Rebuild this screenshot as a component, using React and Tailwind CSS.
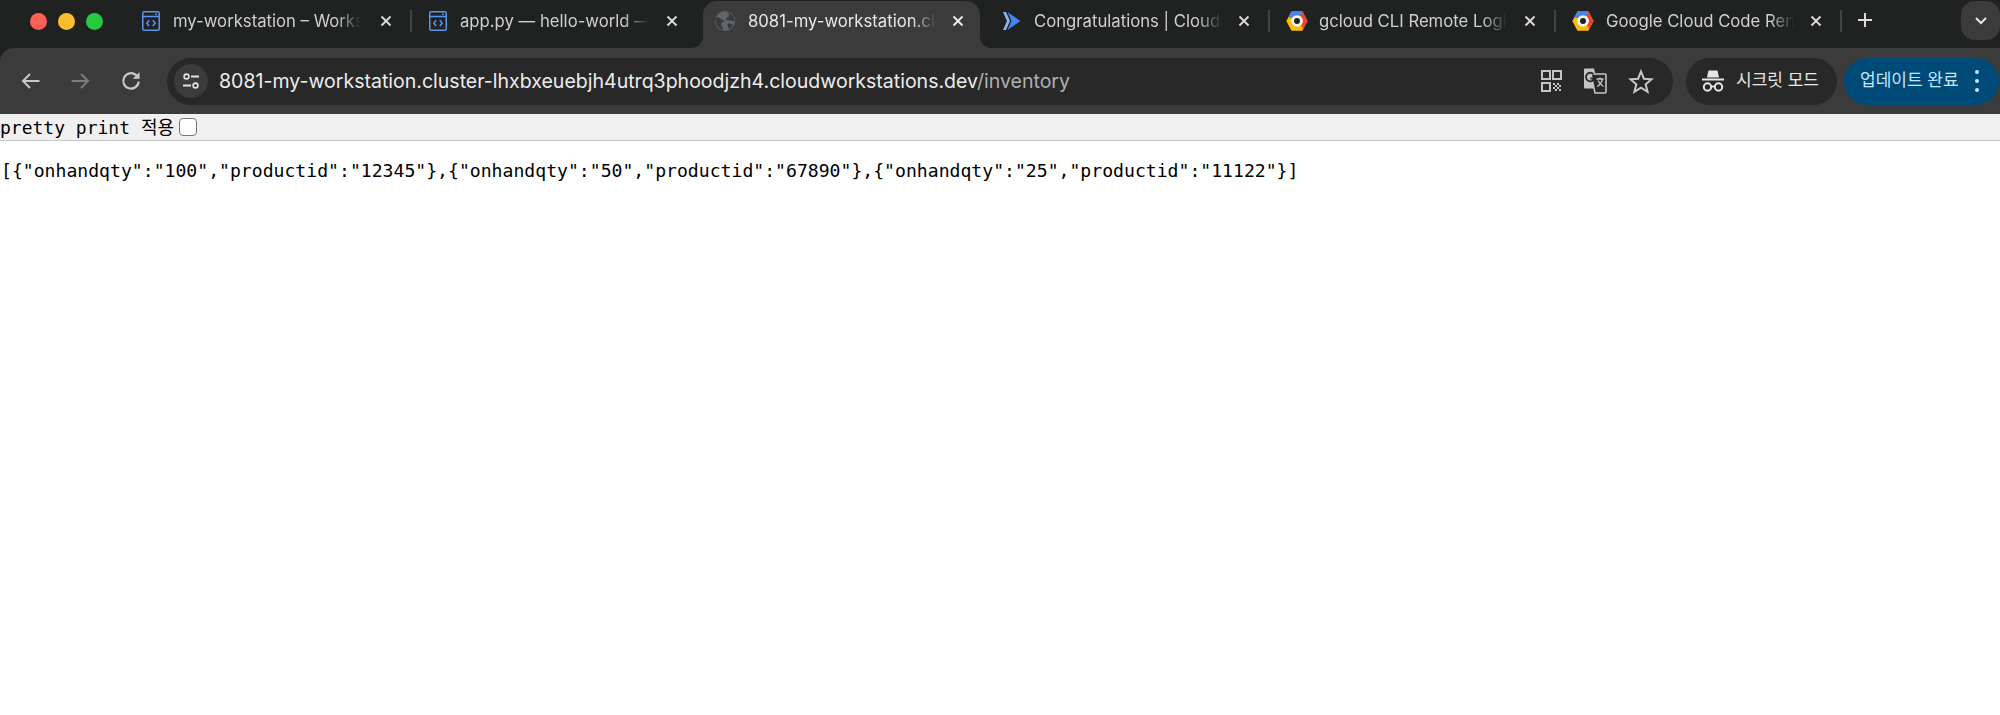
import React from "react";

const sans = "font-['Inter','Noto_Sans_CJK_KR',sans-serif]";

function CodeIcon() {
  return (
    <svg width="18" height="20" viewBox="0 0 18 20" fill="none" className="shrink-0">
      <rect x="0.75" y="0.75" width="16.5" height="18.5" rx="1.5" stroke="#5a95ee" strokeWidth="1.5" />
      <path d="M1 5.5H17" stroke="#5a95ee" strokeWidth="1.5" />
      <circle cx="14" cy="3.2" r="0.9" fill="#5a95ee" />
      <path d="M7.2 9.3 4.8 12.2l2.4 2.9M10.8 9.3l2.4 2.9-2.4 2.9" stroke="#5a95ee" strokeWidth="1.5" />
    </svg>
  );
}

function GlobeIcon() {
  return (
    <svg width="20" height="20" viewBox="0 0 20 20" className="shrink-0">
      <circle cx="10" cy="10" r="10" fill="#62656a" />
      <path d="M1 6c3 0 4 1 5 2s3 0 3 2-3 1-3 3 2 2 2 6C4 18 1 14 .5 10ZM12 1c1 2 3 2 2 4s-3 1-3 3 4 1 6 2 2 1 2.5 0C19 5 16 2 12 1ZM13 13c2-1 4 0 5 1-1 2-2 3-4 4-1-2-2-4-1-5Z" fill="#3a3a3a" />
    </svg>
  );
}

function RunIcon() {
  return (
    <svg width="18" height="18" viewBox="0 0 18 18" className="shrink-0">
      <path d="M0 0H3L7 9 3 18H0L4 9Z" fill="#8ab4f8" />
      <path d="M4.500 0 17.500 9 4.500 18 8.500 9Z" fill="#4285f4" />
    </svg>
  );
}

function GcpIcon() {
  return (
    <svg width="22" height="20" viewBox="0 0 22 20" className="shrink-0">
      <path d="M5.5 0.5H16.5L21.5 10L16.5 19.5H5.5L0.5 10Z" fill="#fbbc05" />
      <path d="M5.5 0.5H16.5L17.5 5H6.5Z" fill="#4285f4" />
      <path d="M2.5 6.2 5.5 0.5 8 4 6.2 7.5Z" fill="#4285f4" />
      <path d="M16.5 0.5 21.5 10 16.5 19.5 15 15.5 17 10 14.5 4Z" fill="#ea4335" />
      <path d="M0.5 10 2.5 6.2 6 8.5 6 12.5 8 15.5 16.5 15.5 16.5 19.5H5.5Z" fill="#fbbc05" />
      <circle cx="11" cy="10" r="5.8" fill="#f4f4f4" />
      <circle cx="11" cy="10" r="3" fill="#202124" />
    </svg>
  );
}

function CloseX({ active }) {
  return (
    <svg width="12" height="12" viewBox="0 0 12 12" className="shrink-0">
      <path d="M1.5 1.5 10.5 10.5M10.5 1.5 1.5 10.5" stroke={active ? "#f0f0f0" : "#dcdcdc"} strokeWidth="1.8" />
    </svg>
  );
}

function Tab({ icon, title, active, sep = true, gap, left }) {
  return (
    <div className="relative flex h-full w-[286px] shrink-0 items-center">
      {active && (
        <div className="absolute top-[1px] bottom-0 left-[6px] right-[3px] rounded-t-[14px] bg-[#3b3b3b]">
          <svg width="12" height="12" viewBox="0 0 12 12" className="absolute bottom-0 left-[-12px]">
            <path d="M12 0V12H0C7 12 12 7 12 0Z" fill="#3b3b3b" />
          </svg>
          <svg width="12" height="12" viewBox="0 0 12 12" className="absolute bottom-0 right-[-12px]">
            <path d="M0 0V12H12C5 12 0 7 0 0Z" fill="#3b3b3b" />
          </svg>
        </div>
      )}
      <div className={`relative flex h-full w-full items-center ${left} pb-[7px]`}>
        {icon}
        <div className={`${gap} h-[24px] w-[192px] shrink-0 overflow-hidden whitespace-nowrap text-[16.7px] leading-[24px] ${active ? "text-[#e8e8e8]" : "text-[#cfcfcf]"} [mask-image:linear-gradient(to_right,black_85%,transparent_98%)] ${sans}`}>
          {title}
        </div>
      </div>
      <div className="absolute left-[255px] top-[15px]">
        <CloseX active={active} />
      </div>
      {sep && <div className="absolute right-[-1px] top-[10px] h-[22px] w-[2px] bg-[#424444]" />}
    </div>
  );
}

function TabBar() {
  return (
    <div className="flex h-[48px] items-stretch bg-[#202222]">
      <div className="flex w-[125px] shrink-0 items-center gap-[11px] pb-[6px] pl-[30px]">
        <div className="h-[17px] w-[17px] rounded-full bg-[#ff5f57]" />
        <div className="h-[17px] w-[17px] rounded-full bg-[#febc2e]" />
        <div className="h-[17px] w-[17px] rounded-full bg-[#28c840]" />
      </div>
      <Tab icon={<CodeIcon />} title="my-workstation – Works" left="pl-[17px]" gap="ml-[13px]" />
      <Tab icon={<CodeIcon />} title="app.py — hello-world —" left="pl-[18px]" gap="ml-[13px]" sep={false} />
      <Tab icon={<GlobeIcon />} title="8081-my-workstation.cl" left="pl-[18px]" gap="ml-[13px]" active sep={false} />
      <Tab icon={<RunIcon />} title="Congratulations | Cloud" left="pl-[20px]" gap="ml-[13px]" />
      <Tab icon={<GcpIcon />} title="gcloud CLI Remote Logi" left="pl-[17px]" gap="ml-[11px]" />
      <Tab icon={<GcpIcon />} title="Google Cloud Code Ren" left="pl-[17px]" gap="ml-[12px]" />
      <div className="flex w-[47px] shrink-0 items-center justify-center pb-[8px] pl-[1px]">
        <svg width="16" height="16" viewBox="0 0 16 16">
          <path d="M8 1V15M1 8H15" stroke="#dcdcdc" strokeWidth="2" />
        </svg>
      </div>
      <div className="flex-1" />
      <div className="mt-[1px] flex h-[39px] w-[39px] shrink-0 items-center justify-center rounded-[14px] bg-[#3b3b3b]">
        <svg width="14" height="10" viewBox="0 0 14 10">
          <path d="M2 2 7 7 12 2" fill="none" stroke="#e6e6e6" strokeWidth="2" />
        </svg>
      </div>
    </div>
  );
}

function Toolbar() {
  return (
    <div className="flex h-[66px] items-center rounded-tl-[14px] bg-[#3b3b3b]">
      <div className="flex w-[167px] shrink-0 items-center pl-[21px]">
        <svg width="20" height="20" viewBox="0 0 20 20" fill="none" className="shrink-0">
          <path d="M18.5 10H2M9 3 2 10l7 7" stroke="#c8c8c8" strokeWidth="2" />
        </svg>
        <svg width="20" height="20" viewBox="0 0 20 20" fill="none" className="ml-[29px] shrink-0">
          <path d="M1.5 10H18M11 3l7 7-7 7" stroke="#7c7c7c" strokeWidth="2" />
        </svg>
        <svg width="22" height="22" viewBox="0 0 20 20" fill="none" className="ml-[30px] shrink-0">
          <path d="M17 10.5A7 7 0 1 1 14.6 4.6L17 7" stroke="#c8c8c8" strokeWidth="2" />
          <path d="M17.8 1.8V8H11.6Z" fill="#c8c8c8" />
        </svg>
      </div>
      <div className="flex h-[47px] w-[1506px] shrink-0 items-center rounded-full bg-[#282828] pl-[7px] pr-[19.5px]">
        <div className="flex h-[34px] w-[34px] shrink-0 items-center justify-center rounded-full bg-[#3b3b3b]">
          <svg width="18" height="18" viewBox="0 0 18 18" fill="none">
            <circle cx="4.5" cy="4.5" r="2.4" stroke="#e3e3e3" strokeWidth="1.6" />
            <path d="M9 4.5H17M1 13.5H9" stroke="#e3e3e3" strokeWidth="1.8" />
            <circle cx="13.5" cy="13.5" r="2.4" stroke="#e3e3e3" strokeWidth="1.6" />
          </svg>
        </div>
        <div className={`ml-[11px] whitespace-nowrap text-[19.55px] leading-[28px] text-[#ececec] ${sans}`}>
          8081-my-workstation.cluster-lhxbxeuebjh4utrq3phoodjzh4.cloudworkstations.dev
          <span className="text-[#b0b0b0]">/inventory</span>
        </div>
        <div className="flex-1" />
        <svg width="21" height="23" viewBox="0 0 21 23" fill="none" className="shrink-0">
          <path d="M1 1h8v8H1ZM12 1h8v8h-8ZM1 13h8v8H1Z" stroke="#c4c4c4" strokeWidth="2" />
          <path d="M12 13h2v2h-2ZM16 13h2v2h-2ZM14 15h2v2h-2ZM18 15h2v2h-2ZM12 17h2v2h-2ZM16 17h2v2h-2ZM14 19h2v2h-2ZM18 19h2v2h-2Z" fill="#c4c4c4" />
        </svg>
        <svg width="24" height="26" viewBox="0 0 24 26" className="ml-[20.5px] shrink-0">
          <path d="M1 1.5a1 1 0 0 1 1-1h9l5 20H2a1 1 0 0 1-1-1Z" fill="#c4c4c4" />
          <path d="M8 6h14a1 1 0 0 1 1 1v17a1 1 0 0 1-1 1H12Z" fill="#282828" stroke="#c4c4c4" strokeWidth="1.6" />
          <path d="M13.5 11h7M17 9.5v1.5M19.5 11c-1 4-3 6.500-5.500 7.500M15 12.500c1 2.500 3 4.500 5.500 6" fill="none" stroke="#c4c4c4" strokeWidth="1.3" />
          <path d="M10.500 6.200a4.300 4.300 0 1 0 .8 4.300H7.400" fill="none" stroke="#282828" strokeWidth="1.800" />
        </svg>
        <svg width="26" height="25" viewBox="0 0 26 25" fill="none" className="ml-[21px] shrink-0">
          <path d="M13 2.500 15.900 9.700 23.600 10.300 17.700 15.300 19.600 22.800 13 18.700 6.400 22.800 8.300 15.300 2.400 10.300 10.100 9.700Z" stroke="#c8c8c8" strokeWidth="2" />
        </svg>
      </div>
      <div className="ml-[13px] flex h-[47px] w-[151px] shrink-0 items-center rounded-full bg-[#282828] pl-[16px]">
        <svg width="22" height="24" viewBox="0 0 22 24" fill="none" className="shrink-0">
          <path d="M5 8.500 6.500 1.500H15.500L17 8.500Z" fill="#e6e6e6" />
          <path d="M0 10.500H22" stroke="#e6e6e6" strokeWidth="2" />
          <circle cx="5.500" cy="18" r="3.700" stroke="#e6e6e6" strokeWidth="2" />
          <circle cx="16.500" cy="18" r="3.700" stroke="#e6e6e6" strokeWidth="2" />
          <path d="M9 17.500H13" stroke="#e6e6e6" strokeWidth="1.800" />
        </svg>
        <span className={`ml-[12px] whitespace-nowrap text-[17px] text-[#e6e6e6] ${sans}`}>시크릿 모드</span>
      </div>
      <div className="ml-[7px] flex h-[47px] w-[155px] shrink-0 items-center rounded-full bg-[#004a77] pl-[16px]">
        <span className={`whitespace-nowrap text-[17px] text-[#c2e7ff] ${sans}`}>업데이트 완료</span>
        <div className="ml-[16px] flex flex-col gap-[5px]">
          <div className="h-[4px] w-[4px] rounded-full bg-[#c2e7ff]" />
          <div className="h-[4px] w-[4px] rounded-full bg-[#c2e7ff]" />
          <div className="h-[4px] w-[4px] rounded-full bg-[#c2e7ff]" />
        </div>
      </div>
    </div>
  );
}

const mono = "font-['DejaVu_Sans_Mono','Noto_Sans_CJK_KR',monospace]";

export default function App() {
  return (
    <div className="h-[715px] w-[2000px] overflow-hidden bg-white">
      <div className="bg-[#202222]">
        <TabBar />
        <Toolbar />
      </div>
      <div className={`flex h-[27px] items-center border-b border-b-[#c8c8c8] bg-[#f0f0f0] text-[18px] text-black ${mono}`}>
        <span className="whitespace-pre">pretty print 적용</span>
        <input type="checkbox" className="ml-[4.5px] h-[18px] w-[18px] appearance-none rounded-[4px] border border-[#767676] bg-white" />
      </div>
      <pre className={`m-0 mt-[17px] pl-[1px] text-[18.12px] leading-[26px] text-black ${mono}`}>
        {'[{"onhandqty":"100","productid":"12345"},{"onhandqty":"50","productid":"67890"},{"onhandqty":"25","productid":"11122"}]'}
      </pre>
    </div>
  );
}
